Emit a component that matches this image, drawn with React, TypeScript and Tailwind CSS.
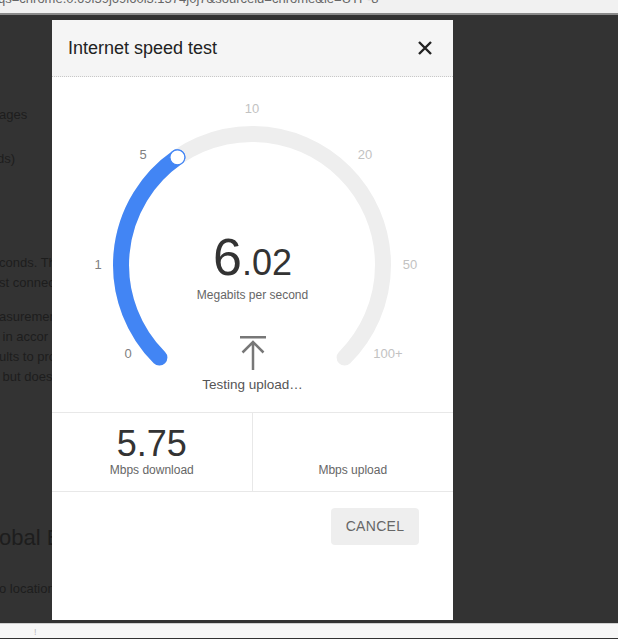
import React from 'react';

const ticks = [
  { label: '0', x: 76, y: 276, active: true },
  { label: '1', x: 46, y: 187, active: true },
  { label: '5', x: 91, y: 77, active: true },
  { label: '10', x: 200, y: 31, active: false },
  { label: '20', x: 313, y: 77, active: false },
  { label: '50', x: 358, y: 187, active: false },
  { label: '100+', x: 336, y: 276, active: false },
];

function Gauge() {
  return (
    <svg className="absolute inset-0" width="401" height="335" viewBox="0 0 401 335">
      <path d="M107.4 280.6 A131 131 0 1 1 292.6 280.6" fill="none" stroke="#eeeeee" strokeWidth="16" strokeLinecap="round" />
      <path d="M107.4 280.6 A131 131 0 0 1 125.4 80.3" fill="none" stroke="#4285f4" strokeWidth="16" strokeLinecap="round" />
      <circle cx="125.4" cy="80.3" r="7.5" fill="#fff" stroke="#4285f4" strokeWidth="1.2" />
      {ticks.map(t => (
        <text
          key={t.label}
          x={t.x}
          y={t.y}
          textAnchor="middle"
          dominantBaseline="central"
          fontSize="13"
          fontFamily="'Liberation Sans', Arial, sans-serif"
          fill={t.active ? '#808080' : '#c2c2c2'}
        >
          {t.label}
        </text>
      ))}
    </svg>
  );
}

function UploadIcon() {
  return (
    <svg width="28" height="36" viewBox="0 0 28 36">
      <rect x="1" y="1" width="26" height="2.5" fill="#777" />
      <path d="M14 7 L14 35 M3.5 17.5 L14 7 L24.5 17.5" fill="none" stroke="#777" strokeWidth="2.5" />
    </svg>
  );
}

export default function App() {
  return (
    <div className="relative w-[618px] h-[639px] overflow-hidden bg-[#333333] font-['Liberation_Sans',Arial,sans-serif]">
      {/* address bar remnant */}
      <div className="h-[15px] overflow-hidden bg-[#f1f1f1] border-b-2 border-[#8a8a8a]">
        <div className="-mt-[11px] -ml-[2px] text-[13px] text-[#666] whitespace-nowrap">
          qs=chrome.0.69i59j69i60l3.1574j0j7&amp;sourceid=chrome&amp;ie=UTF-8
        </div>
      </div>

      {/* page behind overlay */}
      <div className="h-[608px] text-[#1d1d1d] text-[13px] whitespace-nowrap -ml-[1px]">
        <div className="pt-[90px] leading-[20px]">ages</div>
        <div className="pt-[24px] leading-[20px] -ml-[2px]">ds)</div>
        <div className="pt-[84px] leading-[20px]">conds. Th</div>
        <div className="leading-[20px]">st connec</div>
        <div className="pt-[14px] leading-[20px]">asuremen</div>
        <div className="leading-[20px]">&nbsp;in accor</div>
        <div className="leading-[20px]">ults to pro</div>
        <div className="leading-[20px]">&nbsp;but does</div>
        <div className="pt-[136px] text-[22px] leading-[30px]">obal B</div>
        <div className="pt-[26px] leading-[20px]">o location</div>
      </div>

      <div className="h-[15px] bg-[#f7f7f7] border-t border-[#cfcfcf] relative">
        <span className="absolute left-[34px] top-[2px] text-[9px] text-[#bbb]">!</span>
      </div>

      {/* dialog */}
      <div className="absolute left-[52px] top-[20px] w-[401px] h-[600px] bg-white flex flex-col">
        <div className="h-[57px] bg-[#f5f5f5] border-b border-dotted border-[#c8c8c8] flex items-center justify-between pl-[16px] pr-[20px]">
          <span className="text-[18px] text-[#222]">Internet speed test</span>
          <svg width="16" height="16" viewBox="0 0 16 16">
            <path d="M2 2 L14 14 M14 2 L2 14" stroke="#222" strokeWidth="2.4" />
          </svg>
        </div>

        <div className="relative h-[335px]">
          <Gauge />
          <div className="relative flex flex-col items-center pt-[154px]">
            <div className="flex items-baseline text-[#333] leading-none">
              <span className="text-[52px]">6</span>
              <span className="text-[36px]">.02</span>
            </div>
            <div className="mt-[3px] text-[12px] text-[#666]">Megabits per second</div>
            <div className="mt-[31px]">
              <UploadIcon />
            </div>
            <div className="mt-[4px] text-[13.5px] text-[#555]">Testing upload…</div>
          </div>
        </div>

        <div className="h-[80px] grid grid-cols-2 border-t border-b border-[#e8e8e8]">
          <div className="flex flex-col items-center pt-[14px] border-r border-[#e8e8e8]">
            <span className="text-[36px] leading-[34px] text-[#333]">5.75</span>
            <span className="text-[12px] text-[#666]">Mbps download</span>
          </div>
          <div className="flex flex-col items-center pt-[48px]">
            <span className="text-[12px] text-[#666]">Mbps upload</span>
          </div>
        </div>

        <div className="flex justify-end pt-[16px] pr-[34px]">
          <button className="w-[88px] h-[37px] rounded-[4px] bg-[#eeeeee] text-[14px] text-[#666] tracking-[0.3px]">
            CANCEL
          </button>
        </div>
      </div>
    </div>
  );
}
